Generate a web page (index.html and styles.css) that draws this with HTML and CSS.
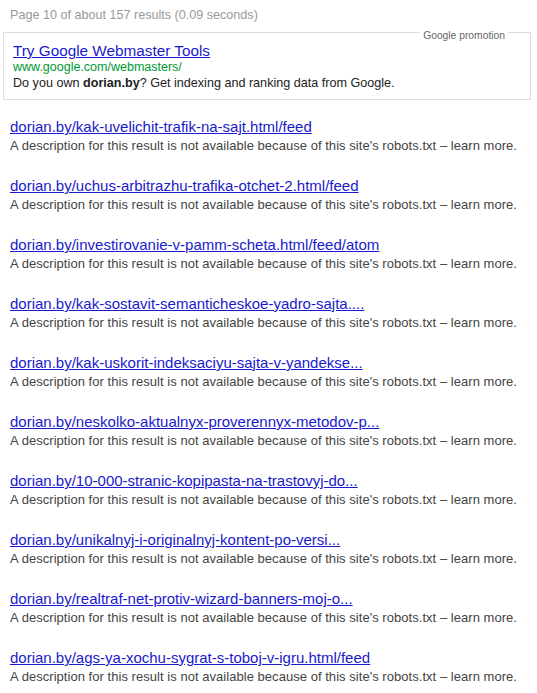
FILE: index.html
```html
<!DOCTYPE html>
<html lang="en">
<head>
    <meta charset="UTF-8">
    <title>Search results</title>
    <link rel="stylesheet" href="styles.css">
</head>
<body>

    <div class="stats">Page 10 of about 157 results (0.09 seconds)</div>

    <!-- Promotion box -->
    <div class="promo">
        <span class="promo-label">Google promotion</span>
        <a class="promo-title" href="#">Try Google Webmaster Tools</a>
        <div class="promo-url">www.google.com/webmasters/</div>
        <div class="promo-desc">Do you own <b>dorian.by</b>? Get indexing and ranking data from Google.</div>
    </div>

    <!-- Results -->
    <ol class="results">
        <li class="result">
            <a href="#">dorian.by/kak-uvelichit-trafik-na-sajt.html/feed</a>
            <div class="desc">A description for this result is not available because of this site's robots.txt – learn more.</div>
        </li>
        <li class="result">
            <a href="#">dorian.by/uchus-arbitrazhu-trafika-otchet-2.html/feed</a>
            <div class="desc">A description for this result is not available because of this site's robots.txt – learn more.</div>
        </li>
        <li class="result">
            <a href="#">dorian.by/investirovanie-v-pamm-scheta.html/feed/atom</a>
            <div class="desc">A description for this result is not available because of this site's robots.txt – learn more.</div>
        </li>
        <li class="result">
            <a href="#">dorian.by/kak-sostavit-semanticheskoe-yadro-sajta....</a>
            <div class="desc">A description for this result is not available because of this site's robots.txt – learn more.</div>
        </li>
        <li class="result">
            <a href="#">dorian.by/kak-uskorit-indeksaciyu-sajta-v-yandekse...</a>
            <div class="desc">A description for this result is not available because of this site's robots.txt – learn more.</div>
        </li>
        <li class="result">
            <a href="#">dorian.by/neskolko-aktualnyx-proverennyx-metodov-p...</a>
            <div class="desc">A description for this result is not available because of this site's robots.txt – learn more.</div>
        </li>
        <li class="result">
            <a href="#">dorian.by/10-000-stranic-kopipasta-na-trastovyj-do...</a>
            <div class="desc">A description for this result is not available because of this site's robots.txt – learn more.</div>
        </li>
        <li class="result">
            <a href="#">dorian.by/unikalnyj-i-originalnyj-kontent-po-versi...</a>
            <div class="desc">A description for this result is not available because of this site's robots.txt – learn more.</div>
        </li>
        <li class="result">
            <a href="#">dorian.by/realtraf-net-protiv-wizard-banners-moj-o...</a>
            <div class="desc">A description for this result is not available because of this site's robots.txt – learn more.</div>
        </li>
        <li class="result">
            <a href="#">dorian.by/ags-ya-xochu-sygrat-s-toboj-v-igru.html/feed</a>
            <div class="desc">A description for this result is not available because of this site's robots.txt – learn more.</div>
        </li>
    </ol>

</body>
</html>
```

FILE: styles.css
```css
* {
    margin: 0;
    padding: 0;
    box-sizing: border-box;
}

body {
    font-family: "Liberation Sans", Arial, sans-serif;
    font-size: 13px;
    color: #222;
    background-color: #fff;
}

a {
    color: #1a1acc;
}

.stats {
    color: #999;
    font-size: 12.6px;
    padding: 7px 10px 0;
    line-height: 16px;
}

/* Promotion box */
.promo {
    position: relative;
    margin: 9px 6px 0 3px;
    border: 1px solid #ddd;
    padding: 8px 9px 7px;
}

.promo-label {
    position: absolute;
    top: -4px;
    right: 22px;
    padding: 0 3px;
    background-color: #fff;
    color: #666;
    font-size: 10.3px;
    line-height: 13px;
}

.promo-title {
    display: block;
    font-size: 15.3px;
    line-height: 19px;
}

.promo-url {
    color: #009933;
    font-size: 12.5px;
    line-height: 15px;
}

.promo-desc {
    font-size: 12.6px;
    line-height: 17px;
}

/* Results */
.results {
    list-style: none;
    padding: 17px 10px 0;
}

.result {
    margin-bottom: 21px;
}

.result a {
    display: block;
    font-size: 15px;
    line-height: 20px;
}

.result .desc {
    color: #444;
    letter-spacing: 0.04px;
    line-height: 18px;
}
```
